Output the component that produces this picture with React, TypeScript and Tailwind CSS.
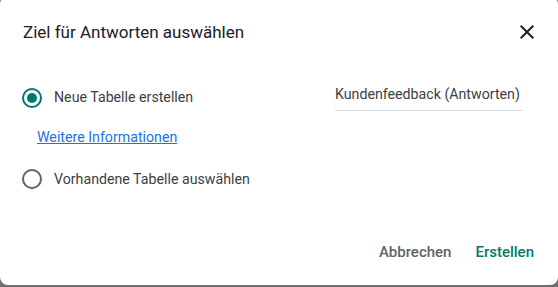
import React from "react";

const Radio = ({ checked }: { checked?: boolean }) => (
  <span
    className={
      "flex h-[20px] w-[20px] shrink-0 items-center justify-center rounded-full border-2 " +
      (checked ? "border-[#00796b]" : "border-[#5f6368]")
    }
  >
    {checked && <span className="h-[10px] w-[10px] rounded-full bg-[#00796b]" />}
  </span>
);

const App = () => {
  return (
    <div className="h-[287px] w-[558px] overflow-hidden bg-[#6f6f6f] font-['Roboto',sans-serif]">
      <div className="-mt-[4px] flex h-[289px] w-[558px] flex-col rounded-lg bg-white">
        <div className="flex items-center justify-between pl-[23px] pr-[15px] pt-[20px]">
          <h1 className="text-[17px] leading-[24px] text-[#202124]">Ziel für Antworten auswählen</h1>
          <button className="flex h-[32px] w-[32px] items-center justify-center text-[#202124]">
            <svg width="24" height="24" viewBox="0 0 24 24" fill="currentColor">
              <path d="M19 6.41 17.59 5 12 10.59 6.41 5 5 6.41 10.59 12 5 17.59 6.41 19 12 13.41 17.59 19 19 17.59 13.41 12z" />
            </svg>
          </button>
        </div>

        <div className="mt-[36px] flex items-center pl-[22px] pr-[35px]">
          <Radio checked />
          <span className="ml-[12px] flex-1 text-[14.2px] text-[#3c4043]">Neue Tabelle erstellen</span>
          <div className="w-[188px] border-b border-[#dadce0] pb-[5px] text-[14.2px] text-[#3c4043]">
            Kundenfeedback (Antworten)
          </div>
        </div>

        <a href="#" className="mt-[16px] ml-[37px] w-fit text-[14.2px] text-[#1a73e8] underline">
          Weitere Informationen
        </a>

        <div className="mt-[20px] flex items-center pl-[22px]">
          <Radio />
          <span className="ml-[12px] text-[14.2px] text-[#3c4043]">Vorhandene Tabelle auswählen</span>
        </div>

        <div className="mt-auto mb-[22px] flex justify-end gap-[24px] pr-[24px]">
          <button className="text-[15px] font-medium text-[#5f6368]">Abbrechen</button>
          <button className="text-[15px] font-medium text-[#00796b]">Erstellen</button>
        </div>
      </div>
    </div>
  );
};

export default App;
